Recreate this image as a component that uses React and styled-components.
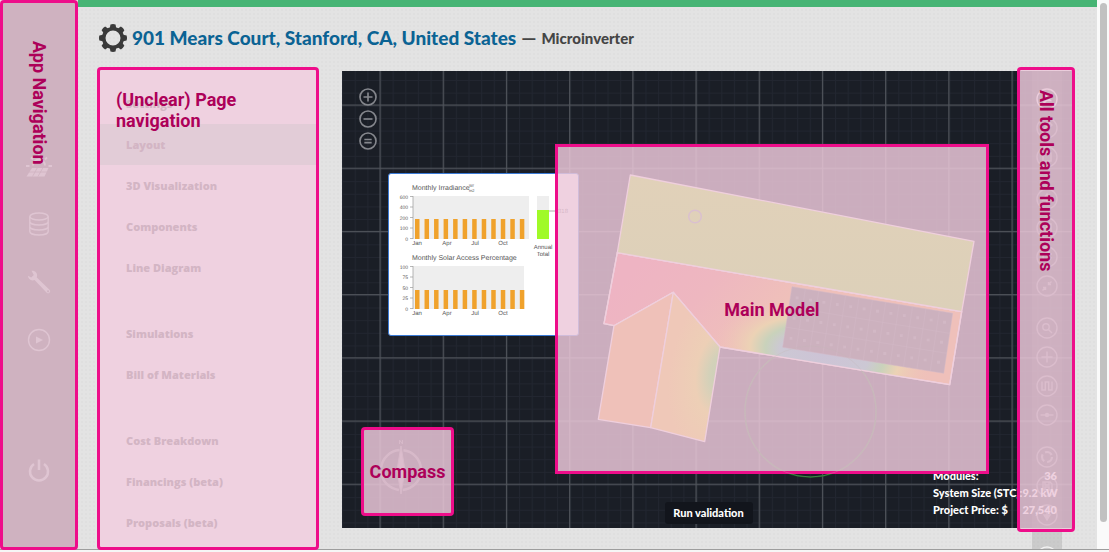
import React from "react";
import styled, { createGlobalStyle } from "styled-components";

const PINK = "#ee0d8a";
const TINT = "rgba(236, 200, 218, 0.843)";
const INK = "#ad0059";

const GlobalStyle = createGlobalStyle`
  * { box-sizing: border-box; }
  body { margin: 0; background: #f6f6f6; font-family: Lato, "Open Sans", sans-serif; }
  button { font: inherit; color: inherit; padding: 0; border: 0; background: none; }
  a { color: inherit; text-decoration: none; }
  svg { display: block; }
`;

const Screen = styled.div`
  display: flex;
  min-height: 100vh;
  padding-bottom: 2px;
  background: #f6f6f6;
`;

const Page = styled.div`
  flex: 1;
  display: flex;
  min-width: 0;
  border-bottom: 1px solid #9d9d9d;
  background-color: #e3e3e3;
  background-image: radial-gradient(#dfdfdf 1px, transparent 1px);
  background-size: 4px 4px;
`;

const ScrollTrack = styled.div`
  width: 12px;
  padding: 3px 3px 0;
  background: #fafafa;
  border-bottom: 1px solid #9d9d9d;
`;

const ScrollThumb = styled.div`
  width: 7px;
  height: 95%;
  border-radius: 4px;
  background: #c1c1c1;
`;

const Label = styled.span`
  font: 700 18px/21px Roboto, sans-serif;
  color: ${INK};
  ${(p) => p.$vertical && "writing-mode: vertical-rl;"}
`;

const AppNav = styled.nav`
  position: relative;
  width: 78px;
  flex: none;
  display: flex;
  flex-direction: column;
  align-items: center;
  gap: 30px;
  padding: 149px 0 60px;
  margin-bottom: -1px;
  border: 3px solid ${PINK};
  border-radius: 4px;
  background: #cfb2c0;
  color: #dfc5d2;
`;

const AppLink = styled.a`
  width: 28px;
  height: 28px;
  margin-top: ${(p) => (p.$apart ? "73px" : "0")};
`;

const AppLabel = styled(Label)`
  position: absolute;
  top: 38px;
  left: 26px;
`;

const Main = styled.div`
  flex: 1;
  min-width: 0;
  display: flex;
  flex-direction: column;
  border-top: 7px solid #46b474;
`;

const Header = styled.header`
  display: flex;
  align-items: center;
  gap: 5px;
  height: 60px;
  padding: 2px 20px 0 21px;
  white-space: nowrap;
`;

const Address = styled.h1`
  margin: 0;
  font: 900 19px/24px Lato, sans-serif;
  color: #0b6394;
`;

const Variant = styled.span`
  font: 900 15px/24px Lato, sans-serif;
  color: #454545;
`;

const Dash = styled(Variant)`
  font-size: 19px;
`;

const Body = styled.div`
  flex: 1;
  display: flex;
  gap: 23px;
  padding: 0 22px 0 19px;
`;

const PageNav = styled.nav`
  position: relative;
  width: 222px;
  flex: none;
  padding: 13px 0 4px;
  margin-bottom: -1px;
  border: 3px solid ${PINK};
  border-radius: 4px;
  background: #efd1e0;
`;

const NavGroup = styled.ul`
  margin: 0 0 25px;
  padding: 0;
  list-style: none;
  &:last-of-type { margin-bottom: 0; }
`;

const NavLink = styled.a`
  display: block;
  height: 41px;
  padding-left: 26px;
  font: 800 11px/41px "Open Sans", sans-serif;
  color: #d3b5c4;
  background: ${(p) => (p.$active ? "#e2ccd7" : "transparent")};
`;

const PageNavLabel = styled(Label)`
  position: absolute;
  top: 19px;
  left: 16px;
  right: 30px;
`;

const Canvas = styled.main`
  position: relative;
  flex: 1;
  min-width: 0;
  margin: 4px 0 21px;
  background: #1a1e26;
`;

const Layer = styled.svg`
  position: absolute;
  inset: 0;
  width: 100%;
  height: 100%;
  pointer-events: none;
`;

const ZoomTools = styled.div`
  position: absolute;
  top: 17px;
  left: 17px;
  display: flex;
  flex-direction: column;
  gap: 4px;
  color: #85878d;
`;

const ZoomButton = styled.button`
  width: 18px;
  height: 18px;
`;

const ChartCard = styled.section`
  position: absolute;
  top: 102px;
  left: 46px;
  width: 191px;
  height: 163px;
  border: 1px solid #3b7bd6;
  border-radius: 3px;
  background: #fff;
  font-family: "Liberation Sans", sans-serif;
  text-rendering: geometricPrecision;
  svg { margin: -1px; }
`;

const Summary = styled.dl`
  position: absolute;
  right: 18px;
  bottom: 10px;
  width: 124px;
  margin: 0;
  font: 900 11px/17px Lato, sans-serif;
  color: #fff;
`;

const SummaryRow = styled.div`
  display: flex;
  justify-content: space-between;
  white-space: nowrap;
  dd { margin: 0; }
`;

const RunButton = styled.button`
  position: absolute;
  left: 50%;
  bottom: 4px;
  width: 88px;
  height: 22px;
  margin-left: -44px;
  border-radius: 3px;
  background: #12151c;
  && { font: 900 11px/22px Lato, sans-serif; }
  color: #fff;
`;

const Toolbar = styled.div`
  position: absolute;
  top: 0;
  right: 13px;
  bottom: -21px;
  width: 30px;
  display: flex;
  flex-direction: column;
  align-items: center;
  gap: 20px;
  padding-top: 17px;
  overflow: hidden;
  background: rgba(120, 120, 120, 0.22);
  color: #7d7d82;
`;

const ToolGroup = styled.div`
  display: flex;
  flex-direction: column;
  gap: 7px;
  color: ${(p) => (p.$apart ? "#f2f2f2" : "inherit")};
`;

const ToolButton = styled.button`
  width: 22px;
  height: 22px;
  color: ${(p) => (p.$active ? "#e0e0e0" : "inherit")};
`;

const Annotation = styled.div`
  position: absolute;
  display: flex;
  align-items: center;
  justify-content: center;
  border: 3px solid ${PINK};
  background: ${TINT};
`;

const ModelArea = styled(Annotation)`
  top: 73px;
  left: 213px;
  width: 434px;
  height: 330px;
`;

const ModelLabel = styled(Label)`
  position: absolute;
  top: 228px;
  left: 213px;
  width: 434px;
  text-align: center;
`;

const CompassArea = styled(Annotation)`
  left: 19px;
  bottom: 12px;
  width: 93px;
  height: 89px;
  border-radius: 4px;
`;

const ToolsArea = styled(Annotation)`
  top: -4px;
  right: 0;
  bottom: -4px;
  width: 58px;
  padding-top: 20px;
  align-items: flex-start;
  border-radius: 4px;
`;

const Stroke = ({ size = 22, width = 1.6, children }) => (
  <svg viewBox="0 0 22 22" width={size} height={size} fill="none" stroke="currentColor" strokeWidth={width}>
    {children}
  </svg>
);

const toolShapes = {
  select: <path d="M8 6v9l2.5-2.5h4z" />,
  draw: <path d="M7 15l1-3 6-6 2 2-6 6z" />,
  square: <path d="M7 7h8v8H7z" />,
  tree: <path d="M11 6l4 6H7zM11 12v4" />,
  grid: <path d="M7 7h8v8H7zM11 7v8M7 11h8" />,
  rotate: <path d="M15 11a4 4 0 1 1-2-3.5M13 5v3h3" />,
  link: <path d="M6.500 15.500l3-3M12.500 9.500l3-3M7 12.500h2.500V15M12.500 7v2.500H15" />,
  search: <><circle cx="10" cy="10" r="3.200" /><path d="M12.400 12.400L16 16" /></>,
  plus: <path d="M11 5.500v11M5.500 11h11" />,
  string: <path d="M6 6.500v8.500h3.300V7h3.400v8H16V6.500M9.300 15V7" />,
  node: <><path d="M4.500 11h13" /><circle cx="11" cy="11" r="1.500" fill="currentColor" /></>,
  cycle: <circle cx="11" cy="11" r="5" strokeWidth="2.200" strokeDasharray="7.500 3" />,
  save: <path d="M7 7h7l2 2v6H7zM9 7v3h4V7M9 15v-3h4v3" />,
  pin: <path d="M11 5v6M8 11h6l-3 5z" fill="currentColor" />,
};

const Tool = ({ name, active }) => (
  <ToolButton type="button" aria-label={name} $active={active}>
    <Stroke width={1.4}>
      <circle cx="11" cy="11" r="10" />
      {toolShapes[name]}
    </Stroke>
  </ToolButton>
);

const toolGroups = [
  ["select", "draw", "square"],
  ["tree", "grid", "rotate", "link"],
  ["search", "plus", "string", "node"],
  ["cycle", "save", "pin"],
];

const navGroups = [
  ["Settings", "Layout", "3D Visualization", "Components", "Line Diagram"],
  ["Simulations", "Bill of Materials"],
  ["Cost Breakdown", "Financings (beta)", "Proposals (beta)"],
];

const Gear = () => (
  <svg width="28" height="28" viewBox="-14 -14 28 28" aria-hidden="true">
    <g fill="#3a3a3a">
      {[0, 45, 90, 135, 180, 225, 270, 315].map((a) => (
        <path key={a} d="M-3.400 -9L-2.500 -13.600Q0 -14.400 2.500 -13.600L3.400 -9z" transform={`rotate(${a})`} />
      ))}
    </g>
    <circle r="9.300" fill="none" stroke="#3a3a3a" strokeWidth="3.600" />
  </svg>
);

const appIcons = [
  ["Solar", <g key="s"><path d="M7 16h16.500L19.500 24.500H1.500z" fill="currentColor" /><path d="M12.500 15.500l-5 9M18 15.500l-5 9M4 20h18" stroke="#cfb2c0" strokeWidth="0.800" /><path d="M8 13.500a6 6 0 0 1 12 0M14 2v3M6 5.500l2 2M22 5.500l-2 2M1 14h3.500M23.500 14H27" fill="none" stroke="currentColor" strokeWidth="1.800" /></g>],
  ["Database", <g key="d" fill="none" stroke="currentColor" strokeWidth="1.400"><ellipse cx="14" cy="6.500" rx="9.200" ry="3.500" /><path d="M4.800 6.500v15c0 2 4 3.500 9.200 3.500s9.200-1.500 9.200-3.500v-15M4.800 11.500c0 2 4 3.500 9.200 3.500s9.200-1.500 9.200-3.500M4.800 16.500c0 2 4 3.500 9.200 3.500s9.200-1.500 9.200-3.500" /></g>],
  ["Tools", <path key="t" fill="currentColor" fillRule="evenodd" d="M6.500 2.800c3-.6 5.900 1.700 5.600 5l-.3 1.700 12.700 12.300c2 2-.8 4.900-2.800 2.900L9.600 12c-3.300 1.300-6.600-.8-6.700-4.200l3.300 1.700 2.600-2.400zM23 22.300a1 1 0 1 0 .1 0z" />],
  ["Play", <g key="p"><circle cx="14" cy="14" r="10.500" fill="none" stroke="currentColor" strokeWidth="1.400" /><path d="M11 10.500l7 3.500-7 3.500z" fill="currentColor" /></g>],
  ["Log out", <path key="l" d="M14 2.500v10.500M9 7a9 9 0 1 0 10 0" fill="none" stroke="currentColor" strokeWidth="2.500" />],
];

const months = [["Jan", 29], ["Apr", 59], ["Jul", 87], ["Oct", 115]];

const BarPlot = ({ top, width, barTop, ticks }) => (
  <g>
    <rect x="25" y={top} width={width} height="43" fill="#eee" />
    <path d={`M25 ${top}v43`} stroke="#999" strokeWidth="0.700" />
    {ticks.map((t, i) => (
      <g key={t}>
        <path d={`M22 ${top + 0.5 + i * 10.5}h3`} stroke="#999" strokeWidth="0.700" />
        <text x="20" y={top + 2.5 + i * 10.5} textAnchor="end" fontSize="5">{t}</text>
      </g>
    ))}
    {Array.from({ length: 12 }, (_, i) => (
      <rect key={i} x={27 + i * 9.53} y={barTop} width="4.500" height={top + 43 - barTop} fill="#f0a22c" />
    ))}
    {months.map(([m, x]) => (
      <text key={m} x={x} y={top + 49} textAnchor="middle" fontSize="6">{m}</text>
    ))}
  </g>
);

const Charts = () => (
  <svg width="190" height="161" viewBox="0 0 190 161" fill="#555" role="img" aria-label="Irradiance charts">
    <text x="24" y="17" fontSize="7">Monthly Irradiance</text>
    <text x="81" y="14" fontSize="4">W/</text>
    <text x="81" y="19" fontSize="4">m2</text>
    <BarPlot top={23} width={116} barTop={46} ticks={["600", "400", "200", "100", "0"]} />
    <rect x="149" y="23" width="12" height="43" fill="#eee" />
    <rect x="149" y="37" width="12" height="29" fill="#a0fa28" />
    <path d="M161 38h10" stroke="#999" strokeWidth="0.800" />
    <text x="170" y="40" fontSize="6">318</text>
    <text x="155" y="76" textAnchor="middle" fontSize="6">Annual</text>
    <text x="155" y="83" textAnchor="middle" fontSize="6">Total</text>
    <text x="24" y="87" fontSize="7">Monthly Solar Access Percentage</text>
    <BarPlot top={93} width={111} barTop={117} ticks={["100", "75", "50", "25", "0"]} />
  </svg>
);

const Grid = () => (
  <Layer aria-hidden="true">
    <defs>
      <pattern id="minor" x="38" y="34.300" width="12.640" height="12.640" patternUnits="userSpaceOnUse">
        <path d="M0 0.500h12.640M0.500 0v12.640" stroke="#222630" strokeWidth="1" />
      </pattern>
      <pattern id="major" x="37.500" y="33.500" width="63.200" height="63.200" patternUnits="userSpaceOnUse">
        <path d="M0 0.600h63.200M0.600 0v63.200" stroke="#50545b" strokeWidth="1.200" />
      </pattern>
    </defs>
    <rect width="100%" height="100%" fill="url(#minor)" />
    <rect width="100%" height="100%" fill="url(#major)" />
    <circle cx="468.500" cy="340.500" r="65.500" fill="none" stroke="#0f6a1c" strokeWidth="1.400" />
    <g fill="none" stroke="#6a6a70" transform="translate(59 399)">
      <circle r="20" strokeWidth="2.500" strokeDasharray="27.400 4" strokeDashoffset="-2" />
      <path d="M0-24L4 0 0 24-4 0z" fill="#858086" />
      <path d="M-1.500-26v-4l3 4v-4" />
    </g>
  </Layer>
);

const lerp = (a, b, t) => a + (b - a) * t;
const corner = { tl: [450, 215.7], tr: [610.7, 242.3], br: [601.7, 302.3], bl: [440.7, 276.3] };
const at = (u, v) => [0, 1].map((k) =>
  lerp(lerp(corner.tl[k], corner.tr[k], u), lerp(corner.bl[k], corner.br[k], u), v).toFixed(1));
const panelLines = [
  ...Array.from({ length: 13 }, (_, i) => `M${at(i / 12, 0)}L${at(i / 12, 1)}`),
  ...Array.from({ length: 4 }, (_, i) => `M${at(0, i / 3)}L${at(1, i / 3)}`),
].join("");
const cells = Array.from({ length: 36 }, (_, i) => at(((i % 12) + 0.5) / 12, (Math.floor(i / 12) + 0.5) / 3));

const Model = () => (
  <Layer aria-hidden="true">
    <defs>
      <linearGradient id="roof" x1="0" y1="0" x2="0" y2="1">
        <stop offset="0" stopColor="#e1d1b9" /><stop offset="1" stopColor="#dcd0b9" />
      </linearGradient>
      <linearGradient id="slope" gradientUnits="userSpaceOnUse" x1="290" y1="200" x2="390" y2="290">
        <stop offset="0" stopColor="#eeb4c3" /><stop offset="0.500" stopColor="#eeb7c0" /><stop offset="1" stopColor="#efc0ba" />
      </linearGradient>
      <radialGradient id="shade" gradientUnits="userSpaceOnUse" cx="0" cy="0" r="1" gradientTransform="translate(482 284) rotate(9) scale(110 55)">
        <stop offset="0" stopColor="#cdc3d6" /><stop offset="0.400" stopColor="#ccc8d4" />
        <stop offset="0.540" stopColor="#c9d2bb" /><stop offset="0.680" stopColor="#ecd2b5" />
        <stop offset="1" stopColor="#efc2b9" stopOpacity="0" />
      </radialGradient>
      <radialGradient id="wing" gradientUnits="userSpaceOnUse" cx="0" cy="0" r="1" gradientTransform="translate(379 302) rotate(9) scale(52 90)">
        <stop offset="0" stopColor="#cbd0ba" /><stop offset="0.220" stopColor="#d3d1b9" />
        <stop offset="0.480" stopColor="#edcfb6" /><stop offset="1" stopColor="#efc8b8" />
      </radialGradient>
    </defs>
    <g stroke="#efcfdd" strokeWidth="1.300" strokeLinejoin="round">
      <path d="M275.300 181.700L619.700 240.700 607.700 313.700 378 276 331.300 221.300 272 254.700 262 252.700z" fill="url(#slope)" />
      <path d="M275.300 181.700L619.700 240.700 607.700 313.700 378 276 331.300 221.300 272 254.700 262 252.700z" fill="url(#shade)" />
      <path d="M288.300 104L632 170.300 619.700 240.700 275.300 181.700z" fill="url(#roof)" />
      <path d="M331.300 221.300L272 254.700 256.300 348.300 308.700 356.700z" fill="#efc1b9" />
      <path d="M331.300 221.300L378 276 362.700 370.700 308.700 356.700z" fill="url(#wing)" />
    </g>
    <path d="M450 215.700L610.700 242.300 601.700 302.300 440.700 276.300z" fill="#ccb1be" />
    <path d={panelLines} stroke="#d3b9c7" strokeWidth="0.500" fill="none" />
    {cells.map(([x, y]) => (
      <rect key={x + "-" + y} x={x - 1.5} y={y - 1.5} width="3" height="3" fill="#d6bdc9" opacity="0.600" />
    ))}
    <circle cx="353" cy="145.500" r="6.300" fill="none" stroke="#dac0cf" strokeWidth="1.500" />
    <circle cx="468.500" cy="340.500" r="65.500" fill="none" stroke="#c5b5b5" strokeWidth="1" opacity="0.300" />
  </Layer>
);

export default function App() {
  return (
    <Screen>
      <GlobalStyle />
      <Page>
        <AppNav aria-label="App Navigation">
          {appIcons.map(([name, shape]) => (
            <AppLink key={name} href="#" aria-label={name} $apart={name === "Log out"}>
              <svg width="28" height="28" viewBox="0 0 28 28">{shape}</svg>
            </AppLink>
          ))}
          <AppLabel $vertical>App Navigation</AppLabel>
        </AppNav>
        <Main>
          <Header>
            <Gear />
            <Address>901 Mears Court, Stanford, CA, United States</Address>
            <Dash>—</Dash>
            <Variant>Microinverter</Variant>
          </Header>
          <Body>
            <PageNav aria-label="Page navigation">
              {navGroups.map((group) => (
                <NavGroup key={group[0]}>
                  {group.map((item) => (
                    <li key={item}><NavLink href="#" $active={item === "Layout"}>{item}</NavLink></li>
                  ))}
                </NavGroup>
              ))}
              <PageNavLabel>(Unclear) Page navigation</PageNavLabel>
            </PageNav>
            <Canvas>
              <Grid />
              <ZoomTools>
                <ZoomButton type="button" aria-label="Zoom in"><Stroke size={18} width={2}><circle cx="11" cy="11" r="9.800" /><path d="M11 5.500v11M5.500 11h11" /></Stroke></ZoomButton>
                <ZoomButton type="button" aria-label="Zoom out"><Stroke size={18} width={2}><circle cx="11" cy="11" r="9.800" /><path d="M5.500 11h11" /></Stroke></ZoomButton>
                <ZoomButton type="button" aria-label="Reset zoom"><Stroke size={18} width={2}><circle cx="11" cy="11" r="9.800" /><path d="M6.500 9.200h9M6.500 13h9" /></Stroke></ZoomButton>
              </ZoomTools>
              <ChartCard><Charts /></ChartCard>
              <Toolbar>
                {toolGroups.map((group, i) => (
                  <ToolGroup key={i}>
                    {group.map((name) => <Tool key={name} name={name} active={name === "select"} />)}
                  </ToolGroup>
                ))}
                <ToolGroup $apart><Tool name="grid" /></ToolGroup>
              </Toolbar>
              <Summary>
                <SummaryRow><dt>Modules:</dt><dd>36</dd></SummaryRow>
                <SummaryRow><dt>System Size (STC):</dt><dd>9.2 kW</dd></SummaryRow>
                <SummaryRow><dt>Project Price: $</dt><dd>27,540</dd></SummaryRow>
              </Summary>
              <RunButton type="button">Run validation</RunButton>
              <ModelArea />
              <Model />
              <ModelLabel>Main Model</ModelLabel>
              <CompassArea><Label>Compass</Label></CompassArea>
              <ToolsArea><Label $vertical>All tools and functions</Label></ToolsArea>
            </Canvas>
          </Body>
        </Main>
      </Page>
      <ScrollTrack><ScrollThumb /></ScrollTrack>
    </Screen>
  );
}
